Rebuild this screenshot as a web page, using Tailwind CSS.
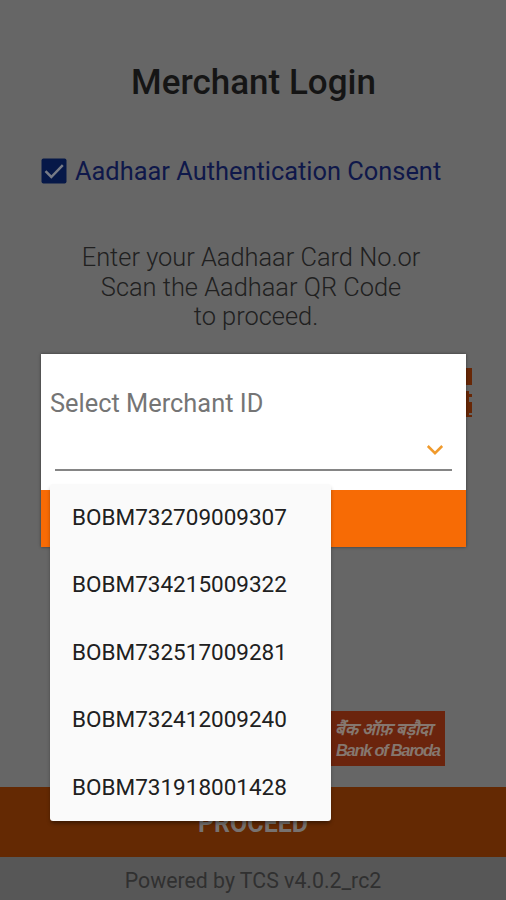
<!DOCTYPE html>
<html lang="en">
<head>
<meta charset="utf-8">
<title>Merchant Login</title>
<script src="https://cdn.jsdelivr.net/npm/@tailwindcss/browser@4"></script>
</head>
<body class="relative h-[900px] w-[506px] overflow-hidden bg-[#666666] font-[Roboto,sans-serif]">
<main class="flex h-full flex-col">
  <h1 class="mt-[61px] h-11 pl-[1px] text-center text-[35px] leading-11 font-medium whitespace-nowrap text-[#151515]"><span>Merchant Login</span></h1>
  <div class="mt-[49px] ml-[41px] flex h-[34px] items-center gap-[8px]">
    <svg class="size-[26px] shrink-0" viewBox="0 0 26 26"><rect x="0.5" y="0.5" width="25" height="25" rx="2" fill="#061848"/><path d="M4.5 13.2 10.3 19 21.8 7.2" fill="none" stroke="#777b86" stroke-width="2.5"/></svg>
    <span class="text-[25.4px] whitespace-nowrap text-[#0f184a]">Aadhaar Authentication Consent</span>
  </div>
  <p class="mt-[55px] pr-[4px] text-center text-[25.4px] leading-[29.5px] font-light whitespace-nowrap text-[#202020]">Enter your Aadhaar Card No.or<br>Scan the Aadhaar QR Code<br><span class="pl-[10px]">to proceed.</span></p>
  <div class="mt-[36px] mr-[34px] flex h-[50px] justify-end">
    <svg class="h-[50px] w-[50px]" viewBox="0 0 50 50"><path d="M0 0h50v17H0zM44 23h3v3h3v3h-3v5h3v11h-3v2h3v2h-6z" fill="#682706"/></svg>
  </div>
  <div class="mt-[293px] mr-[61px] flex h-[56px] justify-end">
    <div class="flex w-[125px] flex-col justify-center bg-[#6b240d] pt-[4px] pl-[15px] text-[#85776f]">
      <span class="h-[20px] text-[17px] leading-[20px] font-bold whitespace-nowrap italic" lang="hi">बैंक ऑफ़ बड़ौदा</span>
      <span class="h-[22px] pl-[1px] font-['Liberation_Sans',sans-serif] text-[16.5px] leading-[22px] font-bold tracking-[-1.3px] whitespace-nowrap italic">Bank of Baroda</span>
    </div>
  </div>
  <div class="mt-[21px] flex h-[70px] items-center justify-center bg-[#642903] pt-[4px] text-[25px] font-bold text-[#777270]">PROCEED</div>
  <footer class="flex h-[43px] items-center justify-center bg-[#575757] pt-1 text-[21.3px] whitespace-nowrap text-[#303030]">Powered by TCS v4.0.2_rc2</footer>
</main>

<section class="absolute top-[354px] left-[41px] flex h-[193px] w-[425px] flex-col bg-white shadow-[0_0_3px_rgba(0,0,0,0.45)]">
  <label class="mt-[32px] ml-[9px] h-[34px] text-[25.4px] leading-[34px] whitespace-nowrap text-[#757575]">Select Merchant ID</label>
  <div class="mt-[14px] mr-[14px] ml-[14px] flex h-[37px] items-center justify-end border-b-2 border-[#858585] pr-[8px]">
    <svg class="mt-[-4px] h-[12px] w-[18px]" viewBox="0 0 18 12"><path d="M1.8 2 9 9.2 16.2 2" fill="none" stroke="#f09a2c" stroke-width="2.5"/></svg>
  </div>
  <div class="mt-auto h-[57px] bg-[#f76b05]"></div>
</section>

<ul class="absolute top-[484px] left-[50px] h-[337px] w-[281px] rounded-[3px] bg-[#fafafa] text-[22.5px] text-[#202020] shadow-[0_3px_4px_-1px_rgba(0,0,0,0.45)]">
  <li class="flex h-[67.5px] items-center pl-[22px]"><span>BOBM732709009307</span></li>
  <li class="flex h-[67.5px] items-center pl-[22px]"><span>BOBM734215009322</span></li>
  <li class="flex h-[67.5px] items-center pl-[22px]"><span>BOBM732517009281</span></li>
  <li class="flex h-[67.5px] items-center pl-[22px]"><span>BOBM732412009240</span></li>
  <li class="flex h-[67.5px] items-center pl-[22px]"><span>BOBM731918001428</span></li>
</ul>
</body>
</html>
